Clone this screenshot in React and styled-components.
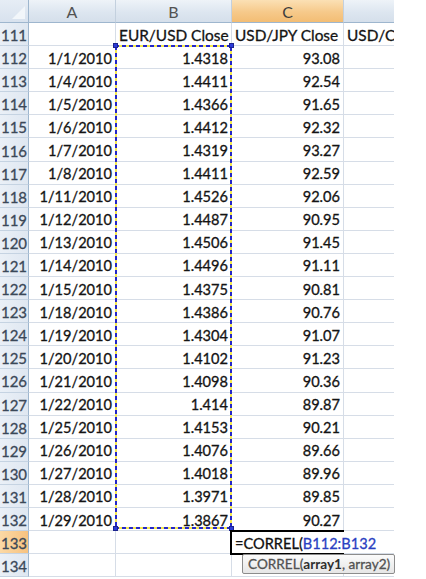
import React from "react";
import styled, { createGlobalStyle, css } from "styled-components";

const GlobalStyle = createGlobalStyle`
  html, body { margin: 0; padding: 0; background: #ffffff; }
  body { font-family: Lato, "Open Sans", sans-serif; }
`;

const ROW_H = 23.1;

const rows = [
  ["1/1/2010", "1.4318", "93.08"],
  ["1/4/2010", "1.4411", "92.54"],
  ["1/5/2010", "1.4366", "91.65"],
  ["1/6/2010", "1.4412", "92.32"],
  ["1/7/2010", "1.4319", "93.27"],
  ["1/8/2010", "1.4411", "92.59"],
  ["1/11/2010", "1.4526", "92.06"],
  ["1/12/2010", "1.4487", "90.95"],
  ["1/13/2010", "1.4506", "91.45"],
  ["1/14/2010", "1.4496", "91.11"],
  ["1/15/2010", "1.4375", "90.81"],
  ["1/18/2010", "1.4386", "90.76"],
  ["1/19/2010", "1.4304", "91.07"],
  ["1/20/2010", "1.4102", "91.23"],
  ["1/21/2010", "1.4098", "90.36"],
  ["1/22/2010", "1.414", "89.87"],
  ["1/25/2010", "1.4153", "90.21"],
  ["1/26/2010", "1.4076", "89.66"],
  ["1/27/2010", "1.4018", "89.96"],
  ["1/28/2010", "1.3971", "89.85"],
  ["1/29/2010", "1.3867", "90.27"],
];

const Sheet = styled.div`
  display: grid;
  grid-template-columns: 29px 87px 116px 112px 50px;
  grid-template-rows: 23px repeat(24, ${ROW_H}px);
  width: 394px;
  font-family: Lato, "Open Sans", sans-serif;
  font-size: 14.6px;
  color: #141414;
  -webkit-text-stroke: 0.3px currentColor;
`;

const placed = css`
  grid-row: ${(p) => p.$r};
  grid-column: ${(p) => p.$c};
`;

const Corner = styled.div`
  ${placed}
  position: relative;
  background: linear-gradient(#e6edf5, #d8e2ee);
  border-right: 1px solid #9eb6ce;
  border-bottom: 1px solid #9eb6ce;
  &::after {
    content: "";
    position: absolute;
    right: 3px;
    bottom: 3px;
    width: 0;
    height: 0;
    border-left: 13px solid transparent;
    border-bottom: 13px solid #f2f6fa;
  }
`;

const ColHeader = styled.div`
  ${placed}
  display: flex;
  align-items: center;
  justify-content: center;
  font-size: 16px;
  -webkit-text-stroke: 0;
  color: ${(p) => (p.$active ? "#3d3d3d" : "#525252")};
  background: ${(p) =>
    p.$active
      ? "linear-gradient(#fbe0b4, #f6c98a 55%, #f3bd74)"
      : "linear-gradient(#eef3f8, #dde6f0 55%, #d5dfeb)"};
  border-right: ${(p) => (p.$open ? "none" : "1px solid #c3d0de")};
  border-bottom: 1px solid #9eb6ce;
  padding-top: 1px;
`;

const RowHeader = styled.div`
  ${placed}
  display: flex;
  align-items: center;
  justify-content: center;
  font-size: 15px;
  color: #3b4858;
  background: ${(p) =>
    p.$active
      ? "linear-gradient(90deg, #fbd9a6, #f7c27f)"
      : "linear-gradient(90deg, #eaf0f7, #dfe7f1)"};
  border-right: 1px solid #9eb6ce;
  border-bottom: 1px solid #c5d3e2;
  padding-top: 2px;
`;

const Cell = styled.div`
  ${placed}
  display: flex;
  align-items: center;
  justify-content: ${(p) => (p.$align === "left" ? "flex-start" : "flex-end")};
  padding: 2px 3px 0 3px;
  font-size: ${(p) => (p.$title ? "15.4px" : "inherit")};
  white-space: nowrap;
  overflow: hidden;
  border-right: ${(p) => (p.$open ? "none" : "1px solid #d6dde7")};
  border-bottom: 1px solid #d6dde7;
  background: #ffffff;
  min-width: 0;
`;

/* copy marquee drawn around the referenced range */
const Marquee = styled.div`
  ${placed}
  position: relative;
  z-index: 3;
  margin: -1px 0 2px -1px;
  pointer-events: none;
  svg {
    display: block;
    width: 100%;
    height: 100%;
  }
`;

const Handle = styled.span`
  position: absolute;
  width: 5px;
  height: 5px;
  background: #2b3bd8;
  border: 1px solid #1c238f;
  box-sizing: border-box;
  ${(p) => (p.$top ? "top: -2px;" : "bottom: -2px;")}
  ${(p) => (p.$left ? "left: -2px;" : "right: -2px;")}
`;

/* in-cell formula editor */
const Editor = styled.div`
  ${placed}
  position: relative;
  z-index: 4;
  margin: -1px 0 -1px -2px;
  border-top: 2px solid #000;
  border-left: 2px solid #000;
  border-bottom: 2px solid #000;
  display: flex;
  align-items: center;
  padding: 1px 0 0 3px;
  white-space: nowrap;
  font-size: 14.6px;
  color: #111;
`;

const Ref = styled.span`
  color: #2a3fc2;
`;

const Caret = styled.span`
  display: inline-block;
  width: 1px;
  height: 17px;
  margin-left: 2px;
  background: #000;
`;

const Tip = styled.div`
  position: absolute;
  top: calc(100% + 1px);
  left: 10px;
  height: 20px;
  box-sizing: border-box;
  padding: 0 4px 0 5px;
  display: flex;
  align-items: center;
  border: 1px solid #8c8c8c;
  border-radius: 2px;
  background: linear-gradient(#fbfbfb, #e6e6e6);
  color: #525252;
  font-size: 13.6px;
  white-space: nowrap;
  b {
    color: #2f2f2f;
    font-weight: 700;
    -webkit-text-stroke: 0;
  }
`;

export default function App() {
  const cols = ["A", "B", "C", ""];
  const cells = [];

  cells.push(<Corner key="corner" $r={1} $c={1} />);
  cols.forEach((c, i) =>
    cells.push(
      <ColHeader key={"h" + i} $r={1} $c={i + 2} $active={c === "C"} $open={i === 3}>
        {c}
      </ColHeader>
    )
  );

  // row 111: column titles
  cells.push(<RowHeader key="r111" $r={2} $c={1}>111</RowHeader>);
  cells.push(<Cell key="a111" $r={2} $c={2} />);
  cells.push(<Cell key="b111" $r={2} $c={3} $align="left" $title>EUR/USD Close</Cell>);
  cells.push(<Cell key="c111" $r={2} $c={4} $align="left" $title>USD/JPY Close</Cell>);
  cells.push(<Cell key="d111" $r={2} $c={5} $align="left" $title $open>USD/CHF Close</Cell>);

  rows.forEach((row, i) => {
    const r = i + 3;
    const n = 112 + i;
    cells.push(<RowHeader key={"r" + n} $r={r} $c={1}>{n}</RowHeader>);
    cells.push(<Cell key={"a" + n} $r={r} $c={2}>{row[0]}</Cell>);
    cells.push(<Cell key={"b" + n} $r={r} $c={3}>{row[1]}</Cell>);
    cells.push(<Cell key={"c" + n} $r={r} $c={4}>{row[2]}</Cell>);
    cells.push(<Cell key={"d" + n} $r={r} $c={5} $open />);
  });

  [133, 134].forEach((n, i) => {
    const r = 24 + i;
    cells.push(<RowHeader key={"r" + n} $r={r} $c={1} $active={n === 133}>{n}</RowHeader>);
    cells.push(<Cell key={"a" + n} $r={r} $c={2} />);
    cells.push(<Cell key={"b" + n} $r={r} $c={3} />);
    if (n !== 133) cells.push(<Cell key={"c" + n} $r={r} $c={4} />);
    cells.push(<Cell key={"d" + n} $r={r} $c={5} $open />);
  });

  return (
    <>
      <GlobalStyle />
      <Sheet>
        {cells}
        <Marquee $r="3 / 24" $c={3}>
          <svg>
            <rect x="0" y="0" width="100%" height="100%" fill="none" stroke="#f4e94c" strokeWidth="4" />
            <rect
              x="0"
              y="0"
              width="100%"
              height="100%"
              fill="none"
              stroke="#2326c9"
              strokeWidth="4"
              strokeDasharray="4 3"
            />
          </svg>
          <Handle $top $left />
          <Handle $top />
          <Handle $left />
          <Handle />
        </Marquee>
        <Editor $r={24} $c={4}>
          =CORREL(<Ref>B112:B132</Ref>
          <Caret />
          <Tip>
            CORREL(<b>array1</b>, array2)
          </Tip>
        </Editor>
      </Sheet>
    </>
  );
}
